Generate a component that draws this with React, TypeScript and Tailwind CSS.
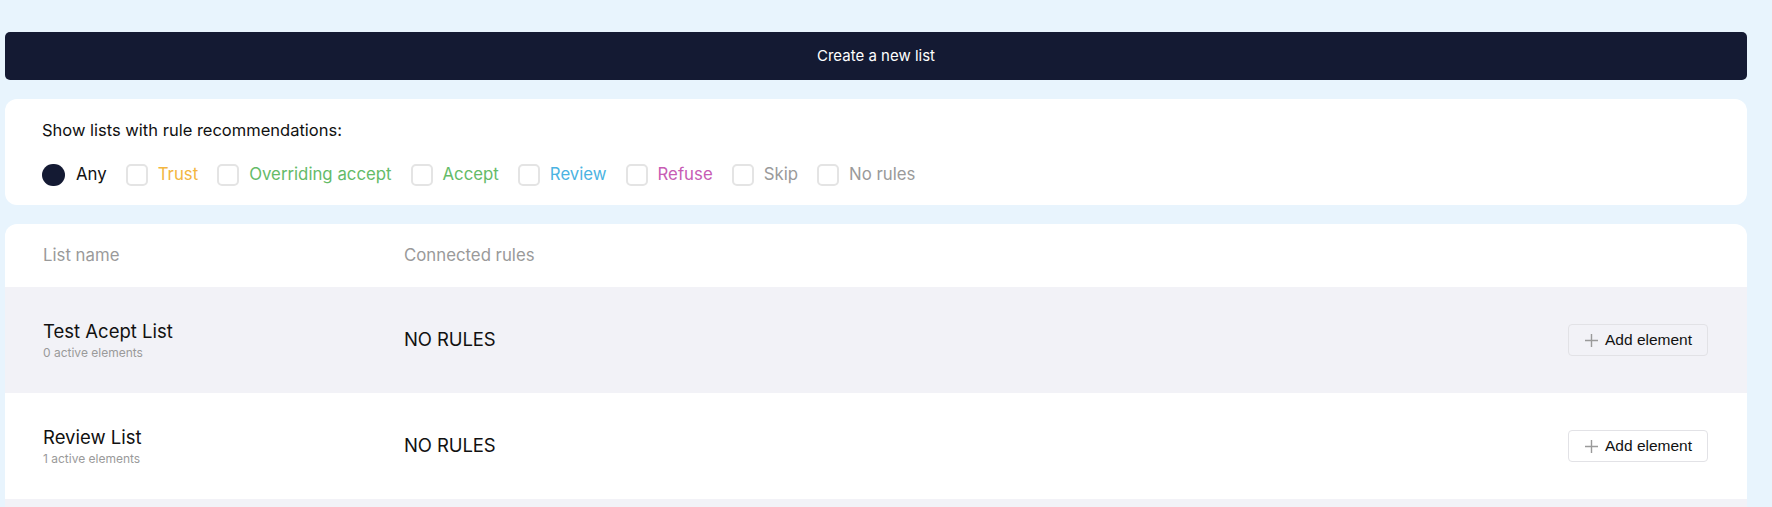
import React from "react";

const font = { fontFamily: "Inter, 'Noto Sans', sans-serif" };

type Opt = { label: string; color: string };

const options: Opt[] = [
  { label: "Trust", color: "text-[#f3b640]" },
  { label: "Overriding accept", color: "text-[#64bb68]" },
  { label: "Accept", color: "text-[#64bb68]" },
  { label: "Review", color: "text-[#4bb3e2]" },
  { label: "Refuse", color: "text-[#c75cb4]" },
  { label: "Skip", color: "text-[#9a9a9a]" },
  { label: "No rules", color: "text-[#9a9a9a]" },
];

function PlusIcon() {
  return (
    <svg width="15" height="15" viewBox="0 0 15 15" className="shrink-0">
      <path d="M7.5 1v13M1 7.5h13" stroke="#9a9a9a" strokeWidth="1.4" fill="none" />
    </svg>
  );
}

function AddButton() {
  return (
    <button
      className="flex items-center gap-[6px] h-8 w-[140px] pl-[15px] rounded-[4px] border border-[#e2e2e6] bg-transparent text-[15.5px] text-[#111] leading-none"
      style={{ fontFamily: "'Liberation Sans', Arial, sans-serif" }}
    >
      <PlusIcon />
      <span>Add element</span>
    </button>
  );
}

function Row({ name, count, gray }: { name: string; count: string; gray?: boolean }) {
  return (
    <div
      className={`grid grid-cols-[361px_1fr_auto] items-center h-[106px] pl-[38px] pr-[39px] ${
        gray ? "bg-[#f2f2f7]" : "bg-white"
      }`}
    >
      <div className="flex flex-col">
        <span className="text-[18.5px] leading-[24px] text-[#111]">{name}</span>
        <span className="text-[12px] leading-[18px] mt-[1px] text-[#9a9a9a]">{count}</span>
      </div>
      <div className="text-[18.5px] text-[#111] tracking-[-0.1px]">NO RULES</div>
      <AddButton />
    </div>
  );
}

export default function App() {
  return (
    <div className="min-h-screen bg-[#e8f4fd] pt-8 pl-[5px] pr-[25px]" style={font}>
      <button className="w-full h-12 rounded-[5px] bg-[#141a33] text-white text-[15px] flex items-center justify-center">
        Create a new list
      </button>

      <div className="mt-[19px] h-[106px] bg-white rounded-xl pl-[37px] pt-[19px]">
        <p className="text-[16.5px] leading-6 text-[#111]">Show lists with rule recommendations:</p>
        <div className="mt-[22px] flex items-center h-[22px]">
          <div className="flex items-center gap-[11px]">
            <span className="w-[23px] h-[22px] rounded-full bg-[#141a33]" />
            <span className="text-[16.8px] text-[#111]">Any</span>
          </div>
          {options.map((o) => (
            <div key={o.label} className="flex items-center gap-[10px] ml-[19px]">
              <span className="w-[22px] h-[22px] rounded-[5px] border-2 border-[#e4e4e4] bg-white" />
              <span className={`text-[16.8px] ${o.color}`}>{o.label}</span>
            </div>
          ))}
        </div>
      </div>

      <div className="mt-[19px] bg-white rounded-t-xl overflow-hidden">
        <div className="grid grid-cols-[361px_1fr] items-center h-[63px] pl-[38px] text-[16.8px] text-[#9a9a9a]">
          <span>List name</span>
          <span>Connected rules</span>
        </div>
        <Row name="Test Acept List" count="0 active elements" gray />
        <Row name="Review List" count="1 active elements" />
        <div className="h-[106px] bg-[#f2f2f7]" />
      </div>
    </div>
  );
}
